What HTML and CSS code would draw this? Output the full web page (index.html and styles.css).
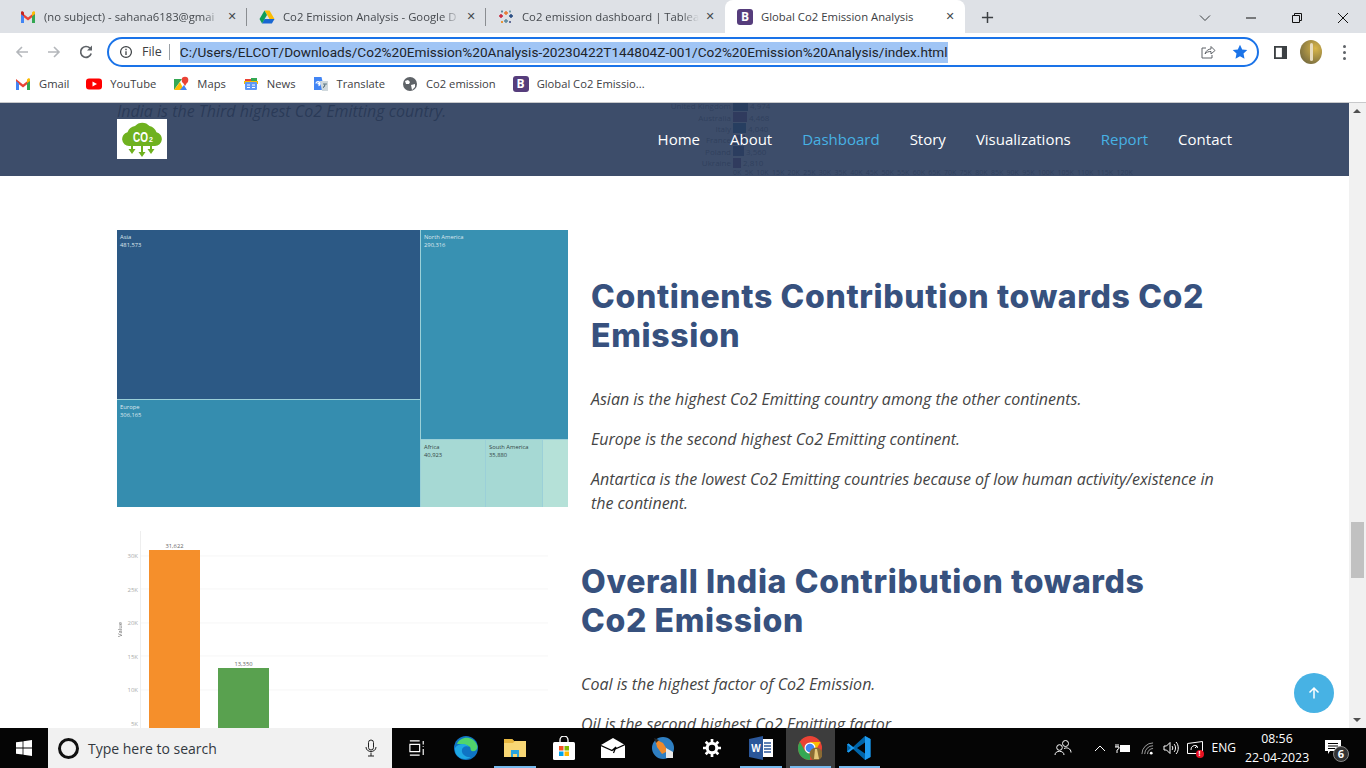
FILE: index.html
```html
<!DOCTYPE html>
<html lang="en">
<head>
<meta charset="utf-8">
<title>Global Co2 Emission Analysis</title>
<link rel="stylesheet" href="styles.css">
</head>
<body>
<div class="tabstrip">
  <div class="tab">
    <svg class="fav" viewBox="0 0 16 16"><path fill="#ea4335" d="M1 3l7 5.500L15 3v3L8 11.500 1 6z"/><path fill="#4285f4" d="M1 5v9h3V7.500z"/><path fill="#34a853" d="M15 5v9h-3V7.500z"/><path fill="#c5221f" d="M1 3.500C1 2 2.500 2 3 2.500L4 3.400V7L1 5z"/><path fill="#fbbc04" d="M15 3.500C15 2 13.500 2 13 2.500L12 3.400V7l3-2z"/></svg>
    <span class="tab-title">(no subject) - sahana6183@gmai</span>
    <span class="tab-x">✕</span>
  </div>
  <div class="tab">
    <svg class="fav" viewBox="0 0 16 16"><path fill="#fbbc04" d="M5.500 1.500h5L15.500 10h-5z"/><path fill="#1967d2" d="M5.500 10h10l-2.600 4.500H3z"/><path fill="#0f9d58" d="M5.500 1.500L8 6 3 14.500.5 10z"/></svg>
    <span class="tab-title">Co2 Emission Analysis - Google D</span>
    <span class="tab-x">✕</span>
  </div>
  <div class="tab">
    <svg class="fav" viewBox="0 0 16 16"><g stroke-width="1.400" fill="none"><path stroke="#e8762d" d="M8 2v4M6 4h4"/><path stroke="#5b879b" d="M8 10v4M6 12h4"/><path stroke="#c72037" d="M3 5v4M1 7h4"/><path stroke="#1f457e" d="M13 5v4M11 7h4"/><path stroke="#59879b" d="M4 1.500v2M3 2.500h2"/><path stroke="#7099a6" d="M12 1.500v2M11 2.500h2"/><path stroke="#eb912b" d="M4 12v2M3 13h2"/><path stroke="#5c6692" d="M12 12v2M11 13h2"/></g></svg>
    <span class="tab-title">Co2 emission dashboard | Tablea</span>
    <span class="tab-x">✕</span>
  </div>
  <div class="tab active">
    <span class="boot">B</span>
    <span class="tab-title">Global Co2 Emission Analysis</span>
    <span class="tab-x">✕</span>
  </div>
  <svg class="newtab" viewBox="0 0 14 14"><path d="M7 1v12M1 7h12" stroke="#3c4043" stroke-width="1.600"/></svg>
  <div class="winctl">
    <svg viewBox="0 0 12 12"><path d="M1 3.500l5 5 5-5" fill="none" stroke="#3c4043"/></svg>
    <svg viewBox="0 0 12 12"><path d="M1 6h10" stroke="#111"/></svg>
    <svg viewBox="0 0 12 12"><path d="M1.500 3.500h7v7h-7zM3.500 3.500v-2h7v7h-2" fill="none" stroke="#111"/></svg>
    <svg viewBox="0 0 12 12"><path d="M1 1l10 10M11 1L1 11" stroke="#111"/></svg>
  </div>
</div>

<div class="toolbar">
  <svg class="tool" viewBox="0 0 16 16"><path d="M14 8H3M8 3L3 8l5 5" fill="none" stroke="#b4b7bb" stroke-width="1.600"/></svg>
  <svg class="tool" viewBox="0 0 16 16"><path d="M2 8h11M8 3l5 5-5 5" fill="none" stroke="#b4b7bb" stroke-width="1.600"/></svg>
  <svg class="tool" viewBox="0 0 16 16"><path d="M13.200 9.500A5.400 5.400 0 1 1 12 4.200" fill="none" stroke="#5f6368" stroke-width="1.700"/><path fill="#5f6368" d="M14 1.500V6.500H9z"/></svg>
  <div class="omnibox">
    <svg class="info" viewBox="0 0 16 16"><circle cx="8" cy="8" r="6.200" fill="none" stroke="#3c4043" stroke-width="1.400"/><path d="M8 7v4.400M8 4.400v1.500" stroke="#3c4043" stroke-width="1.500"/></svg>
    <span class="scheme">File</span>
    <span class="url">C:/Users/ELCOT/Downloads/Co2%20Emission%20Analysis-20230422T144804Z-001/Co2%20Emission%20Analysis/index.html</span>
    <svg class="share" viewBox="0 0 16 16"><path d="M6 4H2v10h10v-3" fill="none" stroke="#5f6368"/><path d="M5 10c1-3.500 3.500-5 6-5V2.500L15 6.500 11 10V7.500C8.500 7.500 6.500 8 5 10z" fill="none" stroke="#5f6368"/></svg>
    <svg class="star" viewBox="0 0 16 16"><path fill="#1a73e8" d="M8 .8l2.200 4.700 5.100.6-3.800 3.500 1 5.100L8 12.200l-4.500 2.500 1-5.100L.7 6.100l5.100-.6z"/></svg>
  </div>
  <svg class="sidep" viewBox="0 0 14 14"><path d="M1 1h12v12H1z" fill="none" stroke="#3c4043" stroke-width="2"/><path d="M8.500 1H13v12H8.500z" fill="#3c4043"/></svg>
  <span class="avatar"><span class="avatar-fig"></span></span>
  <span class="kebab"><i></i><i></i><i></i></span>
</div>

<div class="bookmarks">
  <span class="bm"><svg viewBox="0 0 16 16"><path fill="#ea4335" d="M1 3l7 5.500L15 3v3L8 11.500 1 6z"/><path fill="#4285f4" d="M1 5v9h3V7.500z"/><path fill="#34a853" d="M15 5v9h-3V7.500z"/><path fill="#fbbc04" d="M15 3.500C15 2 13.500 2 13 2.500L12 3.400V7l3-2z"/></svg>Gmail</span>
  <span class="bm"><svg viewBox="0 0 16 16"><rect x="0" y="2.500" width="16" height="11" rx="3" fill="#f00"/><path fill="#fff" d="M6.500 5.500L11 8l-4.500 2.500z"/></svg>YouTube</span>
  <span class="bm"><svg viewBox="0 0 16 16"><path fill="#34a853" d="M1 3l8 0 -8 11z"/><path fill="#fbbc04" d="M1 14l6-8 4 8z"/><path fill="#4285f4" d="M7 14l4-5 3 5z"/><circle cx="12" cy="4" r="3.300" fill="#ea4335"/><path fill="#ea4335" d="M9.200 5.500L12 10l2.800-4.500z"/></svg>Maps</span>
  <span class="bm"><svg viewBox="0 0 16 16"><path fill="#ea4335" d="M2 3h7v3H2z"/><path fill="#34a853" d="M8 2h6v4H8z"/><path fill="#fbbc04" d="M1 5h14v3H1z"/><rect x="2" y="6" width="12" height="8" rx="1" fill="#5e97f6"/><path stroke="#fff" d="M4 9h3M4 11.500h3M9 9h3M9 11.500h3"/></svg>News</span>
  <span class="bm"><svg viewBox="0 0 16 16"><path fill="#4285f4" d="M1 1h7.500l3 13H1z"/><path fill="#cfd8dc" d="M7 5h8v10H9z"/><path stroke="#fff" stroke-width="1.300" fill="none" d="M3 7.500a2 2 0 1 1 2.500 2M4.500 7.500h2"/><path stroke="#607d8b" d="M10 8h4M12 8c0 2-1 3-2 4"/></svg>Translate</span>
  <span class="bm"><svg viewBox="0 0 16 16"><circle cx="8" cy="8" r="7" fill="#5f6368"/><path fill="#fff" d="M3 5l3-1 2 2-1 2-3 0zM9 9l4-1 0 3-3 3z"/></svg>Co2 emission</span>
  <span class="bm"><span class="boot">B</span>Global Co2 Emissio...</span>
</div>

<div class="viewport">
  <main class="page">
    <section class="intro">
      <div class="intro-text"><p class="body">India is the Third highest Co2 Emitting country.</p></div>
      <div class="rank">
        <div class="rank-row"><span class="rank-label">United Kingdom</span><span class="rank-bar navy w15"></span><span class="rank-val">4,974</span></div>
        <div class="rank-row"><span class="rank-label">Australia</span><span class="rank-bar plum w14"></span><span class="rank-val">4,468</span></div>
        <div class="rank-row"><span class="rank-label">Italy</span><span class="rank-bar teal w13"></span><span class="rank-val">4,040</span></div>
        <div class="rank-row"><span class="rank-label">France</span><span class="rank-bar slate w12"></span><span class="rank-val">3,940</span></div>
        <div class="rank-row"><span class="rank-label">Poland</span><span class="rank-bar slate w11"></span><span class="rank-val">3,560</span></div>
        <div class="rank-row"><span class="rank-label">Ukraine</span><span class="rank-bar plum w8"></span><span class="rank-val">2,810</span></div>
        <div class="rank-axis"><span>0K</span><span>5K</span><span>10K</span><span>15K</span><span>20K</span><span>25K</span><span>30K</span><span>35K</span><span>40K</span><span>45K</span><span>50K</span><span>55K</span><span>60K</span><span>65K</span><span>70K</span><span>75K</span><span>80K</span><span>85K</span><span>90K</span><span>95K</span><span>100K</span><span>105K</span><span>110K</span><span>115K</span><span>120K</span></div>
      </div>
    </section>

    <section class="row row-one">
      <div class="treemap">
        <div class="tm-left">
          <div class="tm-cell asia"><span>Asia<br>481,573</span></div>
          <div class="tm-cell europe"><span>Europe<br>306,165</span></div>
        </div>
        <div class="tm-right">
          <div class="tm-cell namerica"><span>North America<br>290,316</span></div>
          <div class="tm-small">
            <div class="tm-cell africa"><span>Africa<br>40,923</span></div>
            <div class="tm-cell samerica"><span>South America<br>35,880</span></div>
            <div class="tm-cell oceania"></div>
          </div>
        </div>
      </div>
      <div class="copy copy-one">
        <h2>Continents Contribution towards Co2 Emission</h2>
        <p class="body">Asian is the highest Co2 Emitting country among the other continents.</p>
        <p class="body">Europe is the second highest Co2 Emitting continent.</p>
        <p class="body">Antartica is the lowest Co2 Emitting countries because of low human activity/existence in the continent.</p>
      </div>
    </section>

    <section class="row row-two">
      <div class="barchart">
        <div class="ylabel">Value</div>
        <div class="yaxis"><span>30K</span><span>25K</span><span>20K</span><span>15K</span><span>10K</span><span>5K</span></div>
        <div class="plot">
          <div class="bar-col"><span class="bar-val">31,622</span><span class="bar coal"></span></div>
          <div class="bar-col"><span class="bar-val">13,350</span><span class="bar oil"></span></div>
        </div>
      </div>
      <div class="copy copy-two">
        <h2>Overall India Contribution towards Co2 Emission</h2>
        <p class="body">Coal is the highest factor of Co2 Emission.</p>
        <p class="body">Oil is the second highest Co2 Emitting factor.</p>
      </div>
    </section>
  </main>

  <div class="scrollbar">
    <span class="arrow up"></span>
    <span class="track"><span class="thumb"></span></span>
    <span class="arrow down"></span>
  </div>

  <header class="sitebar">
    <span class="logo">
      <svg viewBox="0 0 50 40">
        <path fill="#6fb11f" d="M12 27a7 7 0 0 1-1.500-13.800A10 10 0 0 1 18 7a9.500 9.500 0 0 1 14.500 0 10 10 0 0 1 7 6.200A7 7 0 0 1 38 27z"/>
        <text x="16" y="23" class="logo-text" textLength="15" lengthAdjust="spacingAndGlyphs">CO</text><text x="32" y="23" class="logo-sub">2</text>
        <path fill="#6fb11f" d="M24 27h2v6h2.500L25 38l-3.500-5H24zM14 27h2v3h2.500L15 35l-3.500-5H14zM33 27h2v3h2.500L34 35l-3.500-5H33z"/>
      </svg>
    </span>
    <nav class="nav">
      <a>Home</a><a>About</a><a class="hot">Dashboard</a><a>Story</a><a>Visualizations</a><a class="hot">Report</a><a>Contact</a>
    </nav>
  </header>

  <a class="totop"><svg viewBox="0 0 14 14"><path d="M7 12.500V2M2.500 6.500L7 2l4.500 4.500" fill="none" stroke="#fff" stroke-width="1.500"/></svg></a>
</div>

<footer class="taskbar">
  <svg class="start" viewBox="0 0 16 16"><path fill="#fff" d="M0 2.300L6.600 1.400V7.600H0zM7.400 1.300L16 0V7.600H7.400zM0 8.400H6.600V14.600L0 13.700zM7.400 8.400H16V16L7.400 14.700z"/></svg>
  <div class="search">
    <span class="cortana"></span>
    <span class="search-text">Type here to search</span>
    <svg class="mic" viewBox="0 0 14 18"><rect x="4.500" y="1" width="5" height="10" rx="2.500" fill="none" stroke="#222"/><path d="M2 8c0 6 10 6 10 0M7 13.500V17M4 17h6" fill="none" stroke="#222"/></svg>
  </div>
  <div class="apps">
    <span class="app"><svg viewBox="0 0 18 18"><path d="M1 1h11M1 17h11M1 5h11v8H1zM16 1v4M16 7v1M16 10v7" fill="none" stroke="#fff" stroke-width="1.300"/></svg></span>
    <span class="app"><svg viewBox="0 0 24 24"><circle cx="12" cy="12" r="12" fill="#0f74c4"/><path fill="#50d56c" d="M3 8C6 0 19-1 23 9c1.500 4-2 7-5 6-2-.8-1-3-2-4-2.500-2.500-9-3-13-3z"/><path fill="#1ea8e4" d="M1 12c3-5 12-5 14-1-3-2-8 0-7 5 .7 3 5 6 9 5-7 5-17 0-16-9z"/></svg></span>
    <span class="app run"><svg viewBox="0 0 24 20"><path fill="#f8d775" d="M1 1h8l2 2h12v16H1z"/><path fill="#e8b73f" d="M1 5h9l2-2h-1L9 1H1z"/><path fill="#2aa5df" d="M8 12h8v7h-2v-3h-4v3H8z"/></svg></span>
    <span class="app"><svg viewBox="0 0 22 24"><path d="M7 7V4a4 4 0 0 1 8 0v3" fill="none" stroke="#fff" stroke-width="1.300"/><rect y="6" width="22" height="18" rx="1.500" fill="#fff"/><path fill="#f25022" d="M6 10h4.500v4.500H6z"/><path fill="#7fba00" d="M11.500 10H16v4.500h-4.500z"/><path fill="#00a4ef" d="M6 15.500h4.500V20H6z"/><path fill="#ffb900" d="M11.500 15.500H16V20h-4.500z"/></svg></span>
    <span class="app"><svg viewBox="0 0 24 20"><path fill="#fff" d="M0 7L12 0l12 7v13H0z"/><path d="M0 7.500l11 5 4-3.500-2.500 6M11 12.500L24 6.500" fill="none" stroke="#000" stroke-width="1.200"/></svg></span>
    <span class="app"><svg viewBox="0 0 24 24"><circle cx="12" cy="12" r="11" fill="#2f7fc2"/><path fill="#ef8a2c" d="M4 3l8 4 5 8-6 3-5-7z"/><path fill="#e9e9e9" d="M15 12l7 4v6h-7z"/><path fill="#2a2a2a" d="M3 2l5 2-3 3z"/></svg></span>
    <span class="app gear"><svg viewBox="0 0 20 20"><circle cx="10" cy="10" r="5.300" fill="none" stroke="#fff" stroke-width="3.400"/><path stroke="#fff" stroke-width="3" d="M10 0v4M10 16v4M0 10h4M16 10h4M3 3l2.800 2.800M14.200 14.200L17 17M17 3l-2.800 2.800M5.800 14.200L3 17"/></svg></span>
    <span class="app run"><svg viewBox="0 0 24 24"><path fill="#fff" d="M7 3h17v18H7z"/><path stroke="#2b579a" stroke-width="1.300" d="M15 7h7M15 10h7M15 13h7M15 16h7"/><path fill="#2b579a" d="M0 3l14-3v24L0 21z"/><text x="7" y="16" class="word">W</text></svg></span>
    <span class="app current"><svg viewBox="0 0 24 24"><circle cx="12" cy="12" r="12" fill="#ea4335"/><path fill="#fbbc04" d="M12 24l10.500-18H12l5 9z"/><path fill="#34a853" d="M12 24C4 24 0 18 0 12c0-3 1-5 2-6l5 9 5 3z"/><circle cx="12" cy="12" r="5.500" fill="#fff"/><circle cx="12" cy="12" r="4.300" fill="#4285f4"/><circle cx="18" cy="18" r="6.500" fill="#8a6b34"/><path fill="#e5c77a" d="M17 13h2l2 10h-5z"/></svg></span>
    <span class="app run"><svg viewBox="0 0 24 24"><path fill="#0065a9" d="M23.500 3L18 0 6 11 1.500 7.500 0 8.500v7l1.500 1L6 13l12 11 5.500-3zM18 6.500v11L10 12z"/><path fill="#1f9cf0" d="M18 0l5.500 3v18L18 24zM6 11 1.500 7.500 0 8.500 4 12 0 15.500l1.500 1L6 13l2-1z"/></svg></span>
  </div>
  <div class="tray">
    <svg class="people" viewBox="0 0 18 18"><circle cx="11.500" cy="4.500" r="3" fill="none" stroke="#fff"/><circle cx="5.500" cy="8.500" r="2.800" fill="none" stroke="#fff"/><path d="M1 16c0-5 9-5 9 0M10 9.500c3-1.500 7 0 7 4" fill="none" stroke="#fff"/></svg>
    <svg class="tray-up" viewBox="0 0 12 8"><path d="M1 7l5-5 5 5" fill="none" stroke="#fff"/></svg>
    <svg class="tray-batt" viewBox="0 0 16 12"><path fill="#fff" d="M5 3h10v7H5z"/><path d="M1 2v3M3 2v3M0 5h4v1.500L2 8v3" fill="none" stroke="#fff"/></svg>
    <svg class="tray-wifi" viewBox="0 0 14 14"><path d="M1 13A12 12 0 0 1 13 1M4 13a9 9 0 0 1 9-9M7 13a6 6 0 0 1 6-6" fill="none" stroke="#a8a8a8"/><circle cx="11" cy="12" r="1.500" fill="#fff"/></svg>
    <svg class="tray-vol" viewBox="0 0 16 14"><path d="M1 5h2.500L7 1.500v11L3.500 9H1zM9 5c1 1 1 3 0 4M11 3c2 2 2 6 0 8M13 1c3 3 3 9 0 12" fill="none" stroke="#fff"/></svg>
    <span class="tray-disp"><svg viewBox="0 0 16 14"><path d="M.5 2.500l15-2v12H.5z" fill="none" stroke="#fff"/><path d="M4 9a4 4 0 0 1 6-4M8 7l2-2 .5 2" fill="none" stroke="#fff"/></svg><em>!</em></span>
    <span class="lang">ENG</span>
    <span class="clock">08:56<br>22-04-2023</span>
    <span class="notif"><svg viewBox="0 0 16 14"><path fill="#fff" d="M0 0h16v11H5l-2 3v-3H0z"/><path stroke="#000" d="M3 3.500h10M3 6h10M3 8.500h7"/></svg><em>6</em></span>
  </div>
</footer>
</body>
</html>
```
FILE: styles.css
```css
* { box-sizing: border-box; }
html, body { margin: 0; padding: 0; height: 768px; overflow: hidden; }
body { display: flex; flex-direction: column; width: 1366px; font-family: "Open Sans", sans-serif; background: #fff; }

/* tab strip */
.tabstrip { height: 33px; background: #dee1e6; display: flex; align-items: stretch; padding-left: 8px; flex: none; }
.tab { width: 239px; padding: 0 8px 0 12px; display: flex; align-items: center; font: 12px/16px "Open Sans", sans-serif; color: #45494e; position: relative; flex: none; }
.tab:not(.active):not(:nth-child(3))::after { content: ""; position: absolute; right: 0; top: 8px; height: 18px; width: 1px; background: #8a8d91; }
.tab.active { width: 240px; background: #fff; border-radius: 8px 8px 0 0; color: #3c4043; }
.fav { width: 16px; height: 16px; flex: none; }
.tab-title { flex: 1; min-width: 0; white-space: nowrap; overflow: hidden; font-size: 11.300px; margin: 0 4px 0 8px; -webkit-mask-image: linear-gradient(90deg, #000 90%, transparent); mask-image: linear-gradient(90deg, #000 90%, transparent); }
.active .tab-title { -webkit-mask-image: none; mask-image: none; }
.tab-x { width: 14px; font-size: 11px; font-weight: 700; color: #45494e; text-align: center; font-family: "DejaVu Sans", sans-serif; flex: none; }
.boot { width: 16px; height: 16px; border-radius: 3px; background: #563d7c; color: #fff; font: 700 12px/16px "Open Sans", sans-serif; text-align: center; flex: none; display: inline-block; }
.newtab { width: 13px; height: 13px; margin: 11px 0 0 16px; }
.winctl { margin-left: auto; display: flex; gap: 34px; padding: 12px 17px 0 0; }
.winctl svg { width: 12px; height: 12px; }

/* toolbar */
.toolbar { height: 38px; display: flex; align-items: center; flex: none; padding-left: 14px; background: #fff; }
.tool { width: 16px; height: 16px; margin-right: 16px; flex: none; }
.omnibox { width: 1152px; height: 30px; margin-left: -3px; border: 2px solid #1a73e8; border-radius: 15px; display: flex; align-items: center; padding: 0 9px 0 10px; flex: none; }
.info { width: 14px; height: 14px; flex: none; }
.scheme { font: 12.500px/16px "Open Sans", sans-serif; color: #3c4043; margin-left: 9px; padding-right: 7px; border-right: 1px solid #9aa0a6; }
.url { margin-left: 10px; font: 13.600px/21px "Roboto", sans-serif; color: #20242a; background: #a0c5f5; white-space: nowrap; }
.share { width: 16px; height: 16px; margin-left: auto; margin-right: 16px; }
.star { width: 16px; height: 16px; }
.sidep { width: 13px; height: 13px; margin-left: 15px; flex: none; }
.avatar { width: 22px; height: 24px; border-radius: 50%; background: radial-gradient(circle at 70% 35%, #d9b64a, #7d7040 75%); margin-left: 13px; flex: none; display: flex; justify-content: center; }
.avatar-fig { width: 3px; height: 18px; background: #e8dcc0; border-radius: 2px; margin-top: 3px; }
.kebab { display: flex; flex-direction: column; gap: 3px; margin-left: 21px; }
.kebab i { width: 3px; height: 3px; border-radius: 50%; background: #5f6368; }

/* bookmarks */
.bookmarks { height: 32px; display: flex; align-items: center; flex: none; padding: 0 0 6px 15px; gap: 17px; border-bottom: 1px solid #c8c9cb; background: #fff; font: 11.200px/16px "Open Sans", sans-serif; color: #3c4043; }
.bm { display: flex; align-items: center; gap: 8px; white-space: nowrap; }
.bm svg { width: 16px; height: 16px; flex: none; }

/* page area */
.viewport { position: relative; height: 625px; flex: none; display: flex; overflow: hidden; }
.page { flex: 1; min-width: 0; overflow: hidden; padding: 0 0 0 117px; }
.body { font: italic 16px/24px "Open Sans", sans-serif; color: #444; margin: 0 0 16px; }

.intro { height: 74px; display: flex; }
.intro-text { width: 536px; margin-top: -4px; white-space: nowrap; }
.rank { width: 500px; font: 8px/11px "Open Sans", sans-serif; color: #777; margin-top: -3px; }
.rank-row { display: flex; align-items: center; height: 11.400px; }
.rank-label { width: 80px; text-align: right; white-space: nowrap; padding-right: 2px; }
.rank-bar { height: 10px; display: block; }
.rank-val { margin-left: 2px; }
.navy { background: #2c5986; } .plum { background: #7a4d82; } .teal { background: #1e6a96; } .slate { background: #4c5a8c; }
.w15 { width: 15px; } .w14 { width: 14px; } .w13 { width: 13px; } .w12 { width: 12px; } .w11 { width: 11px; } .w8 { width: 8px; }
.rank-axis { display: flex; justify-content: space-between; margin: 0 0 0 80px; width: 400px; font-size: 7px; line-height: 9px; }

.row { display: flex; }
.row-one { height: 354px; padding-top: 53px; }
.copy h2 { font: 800 32px/39px "Inter", sans-serif; color: #37517e; margin: 0 0 32px; letter-spacing: .65px; }
.copy-one { width: 640px; margin-left: 23px; padding-top: 47px; }
.copy-two { width: 590px; margin-left: 33px; padding-top: 31px; }

.treemap { width: 451px; height: 277px; display: flex; flex: none; gap: 1px; background: #9bd0d8; }
.tm-left { width: 303px; display: flex; flex-direction: column; gap: 1px; }
.tm-right { flex: 1; display: flex; flex-direction: column; gap: 1px; }
.tm-cell { font: 5.800px/8px "Open Sans", sans-serif; color: #dfe8ee; padding: 3px 3px; overflow: hidden; }
.asia { background: #2c5985; height: 169px; }
.europe { background: #358daf; flex: 1; }
.namerica { background: #3891b2; height: 209px; }
.tm-small { flex: 1; display: flex; gap: 1px; }
.africa { width: 64px; background: #a6d9d4; color: #344; }
.samerica { width: 56px; background: #a6d9d4; color: #344; }
.oceania { flex: 1; background: #b5e1d8; }

.barchart { width: 431px; height: 197px; flex: none; display: flex; }
.ylabel { width: 7px; writing-mode: vertical-rl; transform: rotate(180deg); font: 5.800px/6px "Open Sans", sans-serif; color: #666; height: 197px; text-align: center; }
.yaxis { width: 16px; margin-top: 21px; height: 176px; display: flex; flex-direction: column; justify-content: space-between; align-items: flex-end; font: 6px/8px "Open Sans", sans-serif; color: #aaa; padding-right: 2px; }
.plot { flex: 1; display: flex; gap: 18px; align-items: flex-end; padding-left: 8px; height: 197px; border-left: 1px solid #eee; background: repeating-linear-gradient(180deg, transparent 0, transparent 32.600px, #f6f6f6 32.600px, #f6f6f6 33.600px); background-position: 0 -8.600px; }
.bar-col { width: 51px; display: flex; flex-direction: column; align-items: center; }
.bar-val { font: 5.800px/8px "Open Sans", sans-serif; color: #666; }
.bar { display: block; width: 51px; }
.coal { height: 178px; background: #f58f2b; }
.oil { height: 60px; background: #59a14f; }

/* scrollbar */
.scrollbar { width: 17px; flex: none; background: #f1f1f1; display: flex; flex-direction: column; }
.track { flex: 1; position: relative; }
.thumb { position: absolute; left: 2px; right: 2px; top: 402px; height: 56px; background: #c1c1c1; }
.arrow { height: 17px; display: block; position: relative; }
.arrow::after { content: ""; position: absolute; left: 4px; border-left: 4px solid transparent; border-right: 4px solid transparent; }
.arrow.up::after { top: 6px; border-bottom: 4px solid #505050; }
.arrow.down::after { top: 7px; border-top: 4px solid #505050; }

/* site header */
.sitebar { position: absolute; left: 0; top: 0; width: 1349px; height: 73px; background: rgba(40,58,90,.9); display: flex; align-items: center; justify-content: space-between; padding: 0 116px 0 117px; }
.logo { width: 50px; height: 40px; background: #fff; display: block; margin-top: -2px; }
.logo svg { width: 50px; height: 40px; display: block; }
.logo-text { font: 700 15px "Liberation Sans Narrow", "Liberation Sans", sans-serif; fill: #fff; }
.logo-sub { font: 700 7px "Liberation Sans", sans-serif; fill: #fff; }
.nav { display: flex; gap: 30px; font: 500 15px/20px "Open Sans", sans-serif; color: #fff; margin: -2px 1px 0 0; }
.hot { color: #47b2e4; }

.totop { position: absolute; right: 32px; bottom: 15px; width: 40px; height: 40px; border-radius: 50%; background: #47b2e4; display: flex; align-items: center; justify-content: center; }
.totop svg { width: 14px; height: 14px; }

/* taskbar */
.taskbar { height: 40px; background: #050505; display: flex; align-items: stretch; flex: none; color: #fff; }
.start { width: 16px; height: 16px; margin: 12px 16px 0 16px; flex: none; }
.search { width: 344px; background: #f1f1f1; display: flex; align-items: center; padding: 0 14px 0 10px; flex: none; color: #222; }
.cortana { width: 21px; height: 21px; border: 3px solid #111; border-radius: 50%; flex: none; }
.search-text { margin: 2px 0 0 9px; font: 14px/20px "Open Sans", sans-serif; color: #33393f; }
.mic { width: 14px; height: 18px; margin-left: auto; }
.apps { display: flex; }
.app { width: 49.200px; height: 40px; display: flex; align-items: center; justify-content: center; position: relative; }
.app svg { width: 24px; height: 24px; }
.app:first-child svg { width: 16px; height: 16px; }
.app.gear svg { width: 18px; height: 18px; }
.app.run::after, .app.current::after { content: ""; position: absolute; left: 4px; right: 4px; bottom: 0; height: 2px; background: #76b9ed; }
.app.current { background: #3d3d3d; }
.word { font: 700 10px "Liberation Sans", sans-serif; fill: #fff; text-anchor: middle; }
.tray { margin-left: auto; display: flex; align-items: center; font: 12px/20px "Open Sans", sans-serif; color: #fff; }
.people { width: 18px; height: 18px; margin-right: 22px; }
.tray-up { width: 12px; height: 8px; margin-right: 9px; }
.tray-batt { width: 16px; height: 12px; margin-right: 10px; }
.tray-wifi { width: 13px; height: 13px; margin-right: 9px; }
.tray-vol { width: 16px; height: 14px; margin-right: 8px; }
.tray-disp { position: relative; width: 16px; height: 14px; margin-right: 9px; display: block; }
.tray-disp svg { width: 16px; height: 14px; display: block; }
.tray-disp em { position: absolute; right: -1px; bottom: -3px; width: 8px; height: 8px; border-radius: 50%; background: #e81123; font: 700 7px/8px "Open Sans", sans-serif; text-align: center; color: #fff; }
.lang { margin-right: 9px; }
.clock { width: 64px; text-align: center; font-size: 12.300px; line-height: 19px; margin-right: 16px; white-space: nowrap; }
.notif { position: relative; width: 16px; height: 14px; display: block; margin-right: 25px; margin-top: -3px; }
.notif svg { width: 16px; height: 14px; display: block; }
.notif em { position: absolute; right: -8px; bottom: -8px; width: 16px; height: 16px; border-radius: 50%; background: #333; border: 1px solid #888; font: 700 11px/14px "Open Sans", sans-serif; text-align: center; color: #fff; }
```
